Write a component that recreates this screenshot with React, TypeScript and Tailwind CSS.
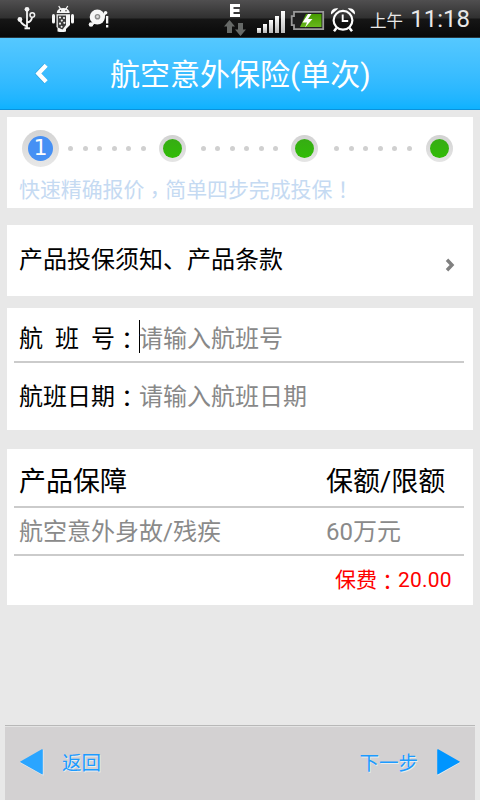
import React from 'react';

function UsbIcon() {
  return (
    <svg className="ml-[17px] mt-[6px] h-6 w-[19px] shrink-0" viewBox="0 0 19 24" fill="none" stroke="#f4f4f4" strokeWidth="1.8">
      <path d="M10 3v19M10 20.5C6 19 3.500 17 3 13.500M10 16.500c3-.4 4.500-2 5-5" />
      <circle cx="10" cy="3.300" r="2.400" fill="#f4f4f4" stroke="none" />
      <circle cx="2.900" cy="13.500" r="2.400" fill="#f4f4f4" stroke="none" />
      <circle cx="15.300" cy="9" r="2.300" strokeWidth="1.500" />
      <path d="M7.500 22.300h5.500" strokeWidth="2" />
    </svg>
  );
}

function DroidIcon() {
  return (
    <svg className="ml-[15px] mt-[5px] h-[28px] w-[24px] shrink-0" viewBox="0 0 24 28" fill="#f6f6f6">
      <path d="M5.800 8c0-2 1.300-3.500 2.800-4.200L7.200 1.300l1-.6 1.700 2.500a9 9 0 0 1 4.700 0L16.300.7l1 .6-1.500 2.500C17.500 4.600 18.700 6 18.700 8z" />
      <circle cx="9.500" cy="5.800" r=".7" fill="#222" /><circle cx="15" cy="5.800" r=".7" fill="#222" />
      <rect x="1" y="9" width="3" height="9.500" rx="1.500" />
      <rect x="20" y="9" width="3" height="9.500" rx="1.500" />
      <path d="M5.500 9.300h13.500v10.700l-4 4v2.500q-4 1.200-8.500 0V23l-1-1z" />
      <path d="M6.800 10.500h8.200v9.500l-3.500 4.500-4.700-2z" fill="#3a3a3a" />
      <g fill="#eee">
        <circle cx="9" cy="12.500" r="1.100" /><circle cx="13" cy="13" r="1.100" /><circle cx="10.800" cy="15.600" r="1.100" />
        <circle cx="13.300" cy="17.800" r="1.100" /><circle cx="9" cy="18.700" r="1.100" /><circle cx="10.600" cy="21.700" r="1" />
      </g>
    </svg>
  );
}

function DiscIcon() {
  return (
    <svg className="ml-[13px] mt-[8px] h-5 w-[22px] shrink-0" viewBox="0 0 22 20" fill="#f6f6f6">
      <circle cx="9.300" cy="9" r="7.600" />
      <circle cx="9.500" cy="8.700" r="2.800" fill="#8a8a8a" />
      <circle cx="9.500" cy="8.700" r="1.400" fill="#ddd" />
      <path d="M4 17 9 12.500" stroke="#f6f6f6" strokeWidth="1.500" />
      <circle cx="3" cy="16.500" r="2.300" />
      <path d="M12.500 14.500c4-2 2-8 5-9.500" stroke="#f6f6f6" strokeWidth="2.200" fill="none" />
      <circle cx="17.600" cy="4.800" r="1.800" />
      <path d="M18 8h2.300v7.500H18zM18 17h2.300v2.500H18z" />
    </svg>
  );
}

function StatusIcons() {
  return (
    <svg className="ml-auto h-[37px] w-[140px] shrink-0" viewBox="220 0 140 37">
      <defs>
        <linearGradient id="signal" x1="0" y1="0" x2="0" y2="1">
          <stop offset="0" stopColor="#fff" /><stop offset="1" stopColor="#bbb" />
        </linearGradient>
        <linearGradient id="cell" x1="0" y1="0" x2="0" y2="1">
          <stop offset="0" stopColor="#469b00" /><stop offset="1" stopColor="#68b81c" />
        </linearGradient>
      </defs>
      <path d="M230 4h10v3h-6.500v2h6v3h-6v2h6.500v3h-10z" fill="#fff" />
      <g fill="#666967">
        <path d="m229.500 20 5.500 6.500h-3V33h-5v-6.500h-3z" />
        <path d="m240.500 36 5.500-6.500h-3V23h-5v6.500h-3z" />
      </g>
      <g fill="url(#signal)">
        <rect x="257" y="28" width="4" height="5" /><rect x="263" y="24" width="4" height="9" />
        <rect x="269" y="20" width="4" height="13" /><rect x="275" y="16" width="4" height="17" />
        <rect x="281" y="11" width="4" height="22" />
      </g>
      <path d="M294 11.800h29.200v17.400H294v-4h-2.300v-9h2.300z" fill="#202020" stroke="#999" strokeWidth="1.800" />
      <path d="M306 14h15.500v13H300z" fill="url(#cell)" />
      <path d="m308 14-5.500 8.500h4.500l-2 5 7.500-8.500h-4.500l3.500-5z" fill="#fff" />
      <g fill="none" stroke="#fff">
        <circle cx="343" cy="20.300" r="9.400" strokeWidth="2.200" />
        <path d="M342.700 14.500v6.500h5.500" strokeWidth="1.900" />
        <path d="m336.500 28-2.500 3.200M349.500 28l2.500 3.200" strokeWidth="2.500" />
      </g>
      <path d="M331.300 14.500c-1.500-3.500 2.500-7.500 7-6zM354.700 14.500c1.500-3.500-2.500-7.500-7-6z" fill="#fff" />
    </svg>
  );
}

function StatusBar() {
  return (
    <div className="flex h-[38px] shrink-0 items-start border-b border-[#28353c] bg-[linear-gradient(#504f50_0px,#303030_18px,#161616_19px,#080808_37px)] text-[#e8e8e8]">
      <UsbIcon />
      <DroidIcon />
      <DiscIcon />
      <StatusIcons />
      <span className="ml-[10px] mt-[11px] w-[39px] whitespace-nowrap text-[16.500px] leading-[22px]">上午</span>
      <span className="mr-[10px] mt-[4px] w-[61px] whitespace-nowrap text-right text-[24px] leading-[30px]">11:18</span>
    </div>
  );
}

function Dots() {
  return (
    <div className="flex gap-[9.500px]">
      {[0, 1, 2, 3, 4, 5].map((i) => (
        <span key={i} className="size-[5px] rounded-full bg-[#d0d0d0]" />
      ))}
    </div>
  );
}

function StepDot() {
  return (
    <div className="flex size-[27px] items-center justify-center rounded-full bg-linear-to-b from-[#d2d2d2] to-[#e5e5e5]">
      <div className="size-[19px] rounded-full bg-linear-to-b from-[#36ac13] to-[#30bc05]" />
    </div>
  );
}

/* Full-width punctuation centred in its em box, as in the Traditional Chinese forms. */
function Centered({ children }: { children: React.ReactNode }) {
  return (
    <span lang="zh-TW" className="inline-block align-[-2px] font-['Noto_Sans_CJK_TC',sans-serif] leading-none">
      {children}
    </span>
  );
}

function Steps() {
  return (
    <section className="mx-[7px] mt-[7px] h-[91px] bg-white">
      <div className="flex h-[62px] items-center pl-[15px]">
        <div className="flex size-[37px] items-center justify-center rounded-full bg-linear-to-b from-[#d3d3d3] to-[#e8e8e8]">
          <div className="flex size-[25px] items-center justify-center rounded-full bg-[#4690f4] font-['DejaVu_Sans',sans-serif] text-[22px] leading-none text-white">1</div>
        </div>
        <div className="ml-[9px]"><Dots /></div>
        <div className="ml-[13px]"><StepDot /></div>
        <div className="ml-[15px]"><Dots /></div>
        <div className="ml-[13px]"><StepDot /></div>
        <div className="ml-[16px]"><Dots /></div>
        <div className="ml-[14px]"><StepDot /></div>
      </div>
      <p className="ml-[12px] mt-[-1px] h-6 whitespace-nowrap text-[20.900px] leading-6 text-[#c5daf2]">
        快速精确报价
        <span lang="zh-TW" className="inline-block align-[-5px] font-['Noto_Sans_CJK_TC',sans-serif] leading-none">，</span>
        简单四步完成投保
        <span lang="zh-TW" className="inline-block font-['Noto_Sans_CJK_TC',sans-serif] leading-none">！</span>
      </p>
    </section>
  );
}

export default function App() {
  return (
    <div
      className="flex h-[800px] w-[480px] flex-col overflow-hidden bg-[#e8e8e8] font-['Roboto','Noto_Sans_CJK_SC',sans-serif]"
      lang="zh-CN"
    >
      <StatusBar />
      <header className="flex h-[72px] shrink-0 items-start border-b border-[#0b92dc] bg-linear-to-b from-[#55c8ff] to-[#0db2ff]">
        <svg className="ml-[35px] mt-[25px] h-[21px] w-[13px]" viewBox="0 0 13 21" fill="none">
          <path d="M11 2 3 10.500l8 8.500" stroke="#268cc0" strokeWidth="5" opacity=".5" />
          <path d="M11.200 2.300 3.400 10.500l7.800 8.200" stroke="#fff" strokeWidth="4.300" />
        </svg>
        <h1 className="ml-[62px] mt-[17px] whitespace-nowrap text-[30px] leading-10 text-white">航空意外保险(单次)</h1>
      </header>
      <Steps />
      <section className="mx-[7px] mt-[17px] flex h-[71px] justify-between bg-white pl-[12px]">
        <span className="mt-[17px] whitespace-nowrap text-[24px] leading-9 text-black">产品投保须知、产品条款</span>
        <svg className="mr-[18px] mt-[33px] h-[14px] w-[10px]" viewBox="0 0 10 14" fill="none" stroke="#808080" strokeWidth="3.400">
          <path d="m2 1.800 5 5.200-5 5.200" />
        </svg>
      </section>
      <section className="mx-[7px] mt-[12px] h-[122px] bg-white pl-[7px] pr-[9px] text-[24px]">
        <div className="flex h-[55px] items-start border-b-2 border-[#cbcbcb] pl-[5px] pt-[12px] leading-9">
          <span className="mt-px flex gap-[12px] text-black"><span>航</span><span>班</span><span>号</span></span>
          <span className="mt-px h-9 w-6 text-black"><Centered>：</Centered></span>
          <span className="h-[33px] w-px bg-black" />
          <span className="-ml-px mt-px whitespace-nowrap text-[#888]">请输入航班号</span>
        </div>
        <div className="flex h-[60px] items-start pl-[5px] pt-[16px] leading-9">
          <span className="h-9 whitespace-nowrap text-black">航班日期<Centered>：</Centered></span>
          <span className="whitespace-nowrap text-[#888]">请输入航班日期</span>
        </div>
      </section>
      <section className="mx-[7px] mt-[19px] h-[156px] bg-white pl-[7px] pr-[9px]">
        <div className="flex h-[59px] border-b-2 border-[#cbcbcb] pl-[5px] pt-[13px] text-[27px] leading-10 text-black">
          <span className="w-[307px]">产品保障</span>
          <span className="whitespace-nowrap">保额/限额</span>
        </div>
        <div className="flex h-[48px] border-b-2 border-[#cbcbcb] pl-[5px] pt-[6px] text-[24px] leading-9 text-[#8a8a8a]">
          <span className="w-[307px]">航空意外身故/残疾</span>
          <span className="whitespace-nowrap">60万元</span>
        </div>
        <p className="mt-[9px] h-[30px] whitespace-nowrap pl-[321px] text-[21px] leading-[30px] text-[#fe0000]">
          保费<Centered>：</Centered><span className="tracking-[0.200px]">20.00</span>
        </p>
      </section>
      <footer className="mx-[5px] mt-auto flex h-[75px] items-center border-t border-[#b8b8b8] bg-[#d3d1d2] text-[19.500px] text-[#1c9bff] shadow-[inset_0_1px_0_#e4e4e4]">
        <svg className="ml-[15px] mt-[-2px] h-7 w-6" viewBox="0 0 24 28">
          <path d="M0 14.800 23.500 1.800v26z" fill="#e7ecef" />
          <path d="M.8 13.200 21.800 1.300q1-.5 1 .8v23.500q0 1.200-1 .7L.8 14.400q-1.400-.6 0-1.200z" fill="#2aa5ff" />
        </svg>
        <span className="ml-[18px] mt-px whitespace-nowrap leading-7 [text-shadow:1px_1px_0_#e7ecef]">返回</span>
        <span className="ml-auto mt-px whitespace-nowrap leading-7 [text-shadow:1px_1px_0_#e7ecef]">下一步</span>
        <svg className="ml-[18px] mr-[15px] mt-[-2px] h-7 w-6" viewBox="0 0 24 28">
          <path d="M24 14.800 1.500 1.800v26z" fill="#e7ecef" />
          <path d="M23.200 13.200 2.200 1.300q-1-.5-1 .8v23.500q0 1.200 1 .7l21-11.900q1.400-.6 0-1.200z" fill="#0095ff" />
        </svg>
      </footer>
    </div>
  );
}
